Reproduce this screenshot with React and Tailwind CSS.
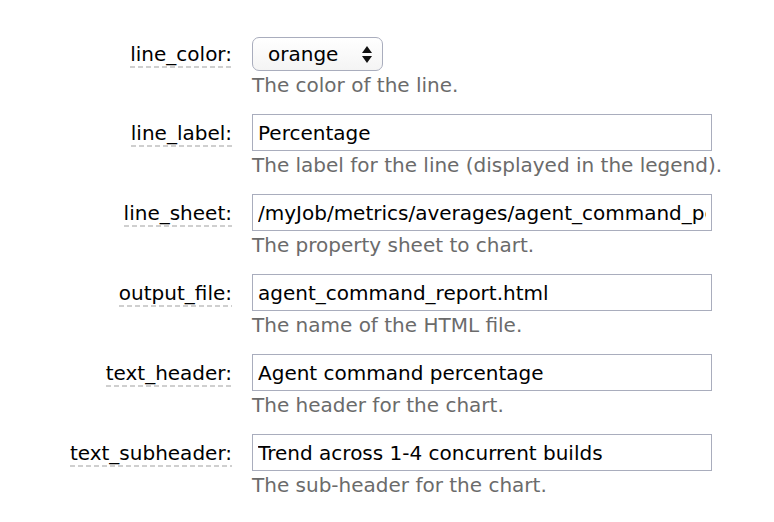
import { useState } from "react"

const fields = [
  { name: "line_label", value: "Percentage", help: "The label for the line (displayed in the legend)." },
  { name: "line_sheet", value: "/myJob/metrics/averages/agent_command_percentage", help: "The property sheet to chart." },
  { name: "output_file", value: "agent_command_report.html", help: "The name of the HTML file." },
  { name: "text_header", value: "Agent command percentage", help: "The header for the chart." },
  { name: "text_subheader", value: "Trend across 1-4 concurrent builds", help: "The sub-header for the chart." },
]

function Label({ children }) {
  return (
    <div className="w-[232px] shrink-0 flex justify-end pt-[3px]">
      <span className="leading-[23px] pb-[2px] text-black bg-[repeating-linear-gradient(to_right,#cfcfcf_0_5px,transparent_5px_8px)] bg-size-[100%_2px] bg-no-repeat bg-bottom">
        {children}:
      </span>
    </div>
  )
}

export default function App() {
  const [values, setValues] = useState(Object.fromEntries(fields.map((f) => [f.name, f.value])))
  const [color, setColor] = useState("orange")

  return (
    <div className="min-h-[522px] bg-white pt-[37px] text-[20px]" style={{ fontFamily: '"DejaVu Sans", Verdana, sans-serif' }}>
      <div className="flex mb-[17px]">
        <div className="h-[34px] flex items-center">
          <Label>line_color</Label>
        </div>
        <div className="ml-5 flex flex-col">
          <div className="relative w-[131px] h-[34px]">
            <select
              value={color}
              onChange={(e) => setColor(e.target.value)}
              className="appearance-none w-full h-full rounded-[7px] border border-[#a9adbd] bg-gradient-to-b from-white to-[#f4f4f4] pl-[15px] text-black leading-[23px] outline-none"
            >
              <option>orange</option>
              <option>blue</option>
              <option>red</option>
              <option>green</option>
            </select>
            <svg className="pointer-events-none absolute right-[11px] top-[9px]" width="10" height="17" viewBox="0 0 10 17">
              <path d="M5 0 L10 7 L0 7 Z" fill="#111" />
              <path d="M0 10 L10 10 L5 17 Z" fill="#111" />
            </svg>
          </div>
          <div className="mt-[3px] leading-[23px] text-[#6b6b6b]">The color of the line.</div>
        </div>
      </div>

      {fields.map((f) => (
        <div key={f.name} className="flex mb-[17px]">
          <div className="h-[37px] flex items-center">
            <Label>{f.name}</Label>
          </div>
          <div className="ml-5 flex flex-col">
            <input
              value={values[f.name]}
              onChange={(e) => setValues({ ...values, [f.name]: e.target.value })}
              className="w-[460px] h-[37px] border border-[#a9adbd] px-[5px] text-black leading-[23px] outline-none"
            />
            <div className="mt-[3px] leading-[23px] text-[#6b6b6b] whitespace-nowrap">{f.help}</div>
          </div>
        </div>
      ))}
    </div>
  )
}
